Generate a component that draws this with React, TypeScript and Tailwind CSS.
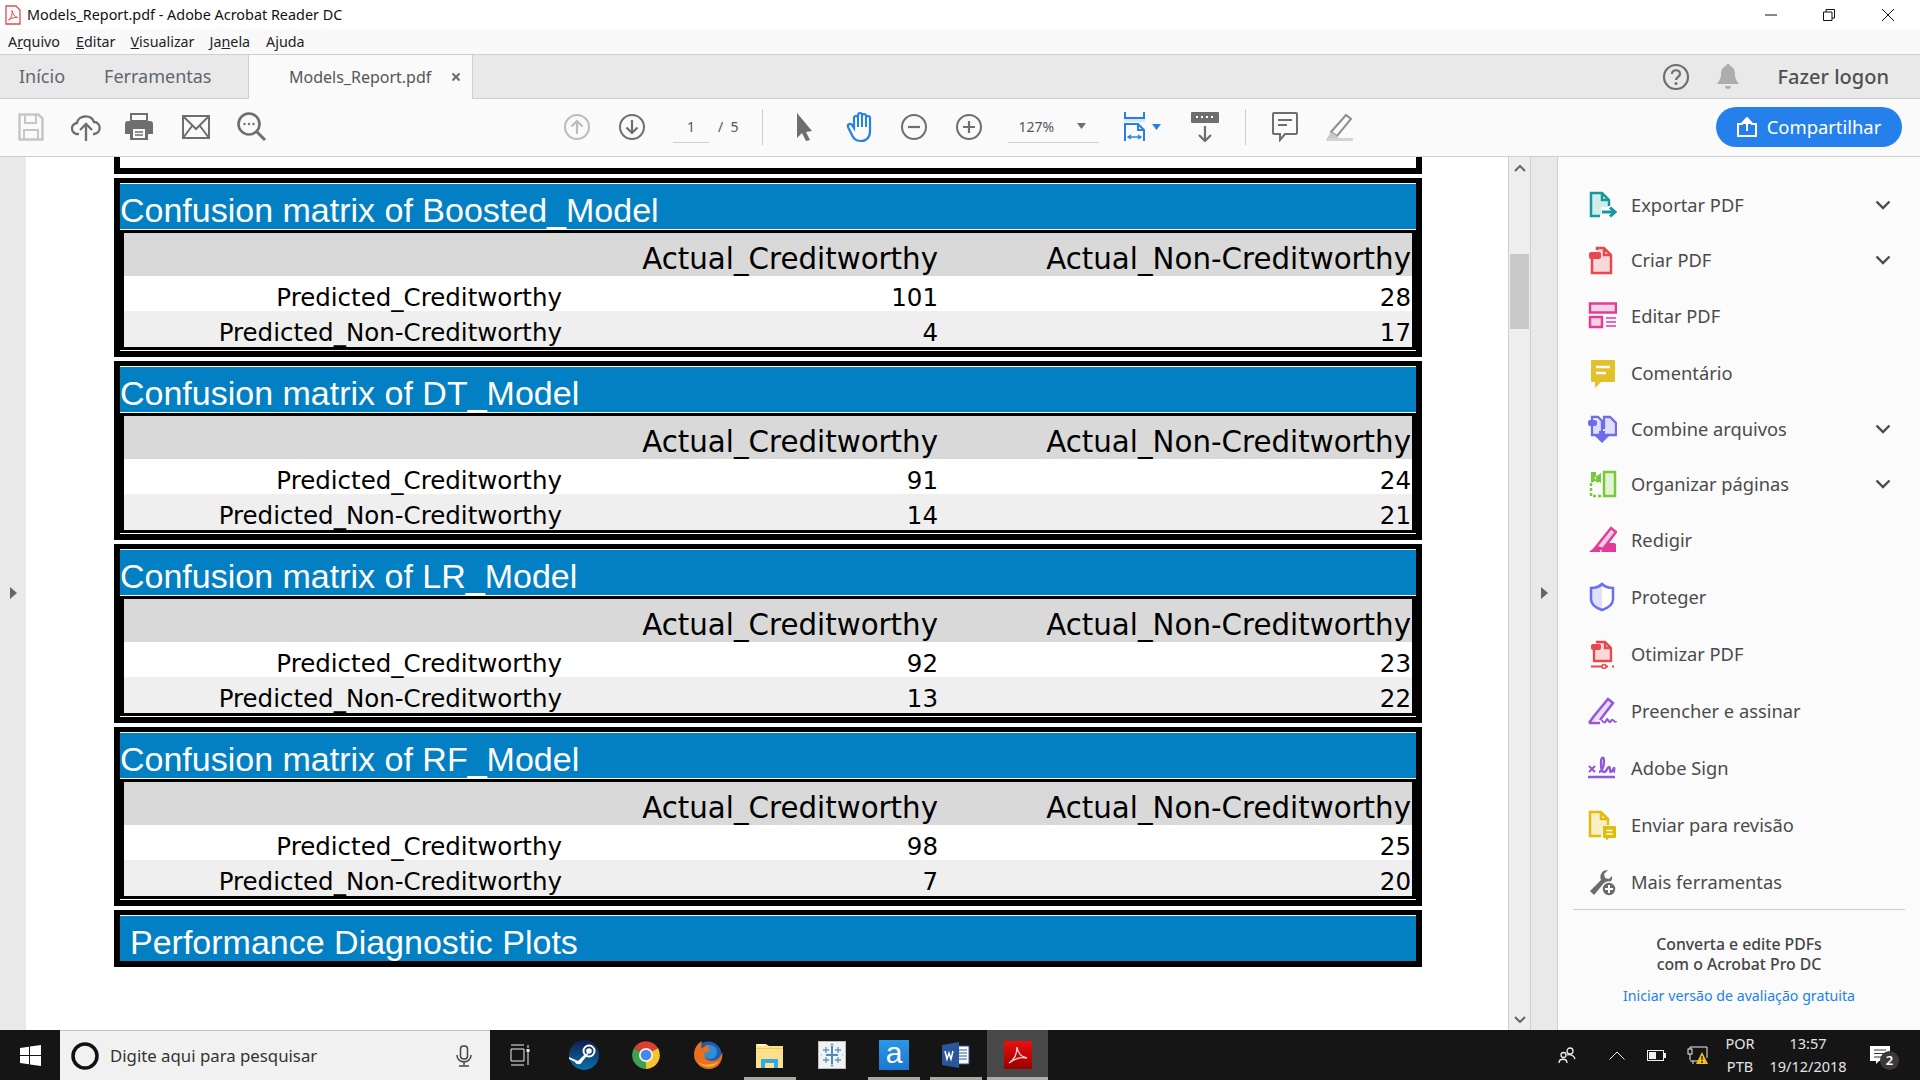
import type { ReactNode } from "react";

const matrices = [
  { name: "Boosted_Model", a: "101", b: "28", c: "4", d: "17" },
  { name: "DT_Model", a: "91", b: "24", c: "14", d: "21" },
  { name: "LR_Model", a: "92", b: "23", c: "13", d: "22" },
  { name: "RF_Model", a: "98", b: "25", c: "7", d: "20" },
];

function Svg({ size = 30, children }: { size?: number; children: ReactNode }) {
  return (
    <svg width={size} height={size} viewBox={`0 0 ${size} ${size}`} fill="none" className="shrink-0">
      {children}
    </svg>
  );
}

/* ---------- side panel icons ---------- */
const toolIcons: Record<string, ReactNode> = {
  export: (
    <Svg>
      <path d="M4 3h11l7 7v7H14v8H4z" fill="#d2ece9" />
      <path d="M13 26H4V3h11l7 7v6M15 3v7h7" stroke="#17989c" strokeWidth="2.5" />
      <path d="M15 22h12M23 17.500l5 4.500-5 4.500" stroke="#17989c" strokeWidth="3" />
    </Svg>
  ),
  create: (
    <Svg>
      <path d="M5 11V28h19V10l-7-7H10v6" fill="#f8d8d9" />
      <path d="M5 14v14h19V10l-7-7H10v2M17 3v7h7" stroke="#e8474c" strokeWidth="2.5" />
      <rect x="2" y="7" width="12" height="7" rx="2" fill="#e8474c" />
    </Svg>
  ),
  edit: (
    <Svg>
      <rect x="3" y="2.500" width="26" height="9" fill="#f5d3e6" stroke="#df3d98" strokeWidth="2.500" />
      <rect x="3" y="16" width="12" height="10" fill="#f5d3e6" stroke="#df3d98" strokeWidth="2.500" />
      <path d="M19 17h10M19 21h10M19 25h10" stroke="#df3d98" strokeWidth="1.500" />
    </Svg>
  ),
  comment: (
    <Svg>
      <path d="M5 2h22a1 1 0 0 1 1 1v20a1 1 0 0 1-1 1H14l-6 6v-6H5a1 1 0 0 1-1-1V3a1 1 0 0 1 1-1z" fill="#e2c12b" />
      <path d="M9 9h14M9 15h10" stroke="#fff" strokeWidth="2.500" />
    </Svg>
  ),
  combine: (
    <Svg>
      <path d="M5 6h10v15H5zM17 3h5l7 6v12H17z" fill="#e0dffb" />
      <path d="M5 12v9h8M5 6V3h6l4 4v14h-2M17 21h12V9l-6-6h-6v12" stroke="#6c6ced" strokeWidth="2.300" />
      <rect x="1" y="6" width="9" height="6" rx="2" fill="#6c6ced" />
      <path d="M12 17h6v5h4l-7 7-7-7h4z" fill="#6c6ced" />
    </Svg>
  ),
  organize: (
    <Svg>
      <rect x="17" y="3" width="11" height="24" fill="#e3f4d6" stroke="#78c83c" strokeWidth="2.500" />
      <path d="M14 27H4V12h10" stroke="#78c83c" strokeWidth="2.500" strokeDasharray="3 2" />
      <path d="M14 4L7 9l7 5zM4 3h5v9H4z" fill="#78c83c" />
    </Svg>
  ),
  redact: (
    <Svg>
      <path d="M9 22L24 3l5 4-13 17z" fill="#f5cde2" stroke="#df3d98" strokeWidth="2.500" />
      <path d="M2 27l7-6 5 3-1 3z" fill="#df3d98" />
      <path d="M20 18h7a2 2 0 0 1 2 2v7H14z" fill="#df3d98" />
    </Svg>
  ),
  protect: (
    <Svg>
      <path d="M15 2c3 3 7 4 11 4v11c0 6-5 9-11 11C9 26 4 23 4 17V6c4 0 8-1 11-4z" fill="#fff" />
      <path d="M15 2C12 5 8 6 4 6v11c0 6 5 9 11 11z" fill="#dfe0fb" />
      <path d="M15 2c3 3 7 4 11 4v11c0 6-5 9-11 11C9 26 4 23 4 17V6c4 0 8-1 11-4z" stroke="#6872f0" strokeWidth="2.500" />
    </Svg>
  ),
  optimize: (
    <Svg>
      <path d="M7 8v13h17V9l-6-6h-9v2" fill="#f8d8d9" />
      <path d="M7 11v11h17V9l-6-6h-8v1M18 3v6h6" stroke="#e8474c" strokeWidth="2.300" />
      <rect x="4" y="5" width="10" height="6" rx="2" fill="#e8474c" />
      <path d="M4 27.500h11M19 27.500h2M25 27.500h2" stroke="#e8474c" strokeWidth="2" />
      <circle cx="17" cy="27.500" r="2" stroke="#e8474c" strokeWidth="1.500" />
    </Svg>
  ),
  fill: (
    <Svg>
      <path d="M7 20L21 3l5 4-13 17-10 2z" fill="#e8dcf6" />
      <path d="M2 27l5-7L21 3l5 4-13 17M2 27h11" stroke="#9258d8" strokeWidth="2.500" />
      <path d="M15 24c1 3 3 3 4 1s1-3 2-1 2 3 3 1 2-1 3 0 2 1 2 0" stroke="#9258d8" strokeWidth="2" />
    </Svg>
  ),
  sign: (
    <Svg>
      <path d="M2 13l6 6M8 13l-6 6" stroke="#9258d8" strokeWidth="2" />
      <path d="M12 19c3 0 5-6 5-11 0-5-3-4-3 1 0 5 0 10 3 10s3-5 5-5 0 5 2 5 2-4 3-4-1 4 1 4" stroke="#9258d8" strokeWidth="2.300" />
      <path d="M1 24h27" stroke="#9258d8" strokeWidth="2.500" />
    </Svg>
  ),
  review: (
    <Svg>
      <path d="M3 2h11l7 7v10h-6v7H3z" fill="#f8efc4" />
      <path d="M14 26H3V2h11l7 7v6M14 2v7h7" stroke="#e0bd0a" strokeWidth="2.500" />
      <path d="M17 16h11a1 1 0 0 1 1 1v10a1 1 0 0 1-1 1h-6l-3 3v-3h-2a1 1 0 0 1-1-1V17a1 1 0 0 1 1-1z" fill="#e0bd0a" />
      <path d="M19.500 20.500h6M19.500 24h6" stroke="#fff" strokeWidth="1.500" />
    </Svg>
  ),
  more: (
    <Svg>
      <path d="M3 24L14 13c-2-5 1-10 7-10l-4 4 1 4 4 1 3-3c1 5-3 8-8 7L7 28z" fill="#6b6b6b" />
      <circle cx="22" cy="22" r="7" fill="#6b6b6b" stroke="#fbfbfb" strokeWidth="1.500" />
      <path d="M22 18v8M18 22h8" stroke="#fff" strokeWidth="2" />
    </Svg>
  ),
};

const tools = [
  { icon: "export", label: "Exportar PDF", arrow: true },
  { icon: "create", label: "Criar PDF", arrow: true },
  { icon: "edit", label: "Editar PDF" },
  { icon: "comment", label: "Comentário" },
  { icon: "combine", label: "Combine arquivos", arrow: true },
  { icon: "organize", label: "Organizar páginas", arrow: true },
  { icon: "redact", label: "Redigir" },
  { icon: "protect", label: "Proteger" },
  { icon: "optimize", label: "Otimizar PDF" },
  { icon: "fill", label: "Preencher e assinar" },
  { icon: "sign", label: "Adobe Sign" },
  { icon: "review", label: "Enviar para revisão" },
  { icon: "more", label: "Mais ferramentas" },
];

function TitleBar() {
  return (
    <div className="flex h-[29px] shrink-0 items-center bg-white pl-[5px] text-[14.4px] text-[#111]">
      <svg width="16" height="20" viewBox="0 0 16 20" fill="none">
        <path d="M1 1h10l4 4v14H1z" fill="#fff" stroke="#e8474c" strokeWidth="1.300" />
        <path d="M3.500 15c3-2 4-6 3.500-9.500 1 4 2.500 6 5.500 7-3-.3-6 .5-9 2.500z" stroke="#e8474c" />
      </svg>
      <span className="ml-[6px]">Models_Report.pdf - Adobe Acrobat Reader DC</span>
      <div className="ml-auto flex items-center">
        <svg width="12" height="2" viewBox="0 0 12 2" className="mr-[46px]">
          <path d="M0 1h12" stroke="#111" />
        </svg>
        <svg width="12" height="12" viewBox="0 0 12 12" fill="none" className="mr-[47px]">
          <path d="M.5 3h8.500v8.500H.5zM3 3V.5h8.500V9H9" stroke="#111" />
        </svg>
        <svg width="12" height="12" viewBox="0 0 12 12" className="mr-[26px]">
          <path d="M0 0l12 12M12 0L0 12" stroke="#111" />
        </svg>
      </div>
    </div>
  );
}

function MenuBar() {
  return (
    <div className="flex h-[25px] shrink-0 items-center bg-[#f9f9f9] pl-[8px] text-[14.300px] text-[#222]">
      <span>A<u>r</u>quivo</span>
      <span className="ml-[16px]"><u>E</u>ditar</span>
      <span className="ml-[15px]"><u>V</u>isualizar</span>
      <span className="ml-[15px]">Ja<u>n</u>ela</span>
      <span className="ml-[16px]">A<u>j</u>uda</span>
    </div>
  );
}

function TabBar() {
  return (
    <div className="flex h-[45px] shrink-0 items-stretch border-y border-[#cfcfcf] bg-[#e9e9e9] text-[#5d6770]">
      <div className="flex w-[248px] items-center pl-[19px] text-[18px]">
        <span>Início</span>
        <span className="ml-[39px]">Ferramentas</span>
      </div>
      <div className="-mb-px flex w-[225px] items-center border-x border-[#cfcfcf] bg-[#fafafa] pl-[40px] text-[16px] text-[#555]">
        <span>Models_Report.pdf</span>
        <svg width="10" height="10" viewBox="0 0 10 10" className="ml-[20px]">
          <path d="M1.500 1.500l7 7M8.500 1.500l-7 7" stroke="#666" strokeWidth="1.800" />
        </svg>
      </div>
      <div className="ml-auto flex items-center pr-[31px]">
        <svg width="28" height="28" viewBox="0 0 28 28" fill="none">
          <circle cx="14" cy="14" r="12" stroke="#6e6e6e" strokeWidth="2.200" />
          <path d="M10 11c0-5 8-5 8 0 0 3-4 3-4 6" stroke="#6e6e6e" strokeWidth="2.200" />
          <circle cx="14" cy="20.500" r="1.500" fill="#6e6e6e" />
        </svg>
        <svg width="24" height="27" viewBox="0 0 24 27" className="ml-[26px]">
          <path d="M12 1c2 0 2 1 2 2 4 1 5 5 5 8 0 5 2 7 4 10H1c2-3 4-5 4-10 0-3 1-7 5-8 0-1 0-2 2-2zM9 23h6c0 2-1.500 3-3 3s-3-1-3-3z" fill="#adadad" />
        </svg>
        <span className="ml-[38px] text-[20px] font-medium text-[#505050]">Fazer logon</span>
      </div>
    </div>
  );
}

const gray = "#6e6e6e";

function CircleIcon({ color, d }: { color: string; d: string }) {
  return (
    <svg width="26" height="26" viewBox="0 0 26 26" fill="none" className="shrink-0">
      <circle cx="13" cy="13" r="12" stroke={color} strokeWidth="2" />
      <path d={d} stroke={color} strokeWidth="2.200" />
    </svg>
  );
}

function ToolBar() {
  return (
    <div className="flex h-[58px] shrink-0 items-center border-b border-[#cfcfcf] bg-[#fafafa] pb-[2px]">
      <div className="ml-[18px] w-[26px]">
        <svg width="26" height="28" viewBox="0 0 26 28" fill="none">
          <path d="M1.500 1.500h19l4 4v21h-23z" stroke="#c6c6c6" strokeWidth="2.500" />
          <path d="M7 2v8h11V2M6 26v-9h14v9" stroke="#c6c6c6" strokeWidth="2" />
        </svg>
      </div>
      <div className="ml-[27px]">
        <svg width="30" height="30" viewBox="0 0 30 30" fill="none">
          <path d="M8 22H7a5.500 5.500 0 0 1-1-11c1-8 14-9 17-1 7 0 8 11 0 12h-1" stroke={gray} strokeWidth="2.300" />
          <path d="M15 29V13M9 18l6-6 6 6" stroke={gray} strokeWidth="2.300" />
        </svg>
      </div>
      <div className="ml-[24px]">
        <svg width="28" height="28" viewBox="0 0 28 28" fill="none">
          <path d="M6 1h16v7H6z" stroke={gray} strokeWidth="2" />
          <path d="M3 8h22a3 3 0 0 1 3 3v10h-5v6H5v-6H0V11a3 3 0 0 1 3-3z" fill={gray} />
          <path d="M8 16h12v9H8z" fill="#fafafa" />
          <path d="M10 19h8M10 22h8" stroke={gray} strokeWidth="1.500" />
        </svg>
      </div>
      <div className="ml-[29px]">
        <svg width="28" height="24" viewBox="0 0 28 24" fill="none">
          <path d="M1 1h26v22H1zM1 1l13 13L27 1M1 23l9-12M27 23l-9-12" stroke={gray} strokeWidth="2" />
        </svg>
      </div>
      <div className="ml-[27px]">
        <svg width="30" height="30" viewBox="0 0 30 30" fill="none">
          <circle cx="12" cy="12" r="10.500" stroke={gray} strokeWidth="2.600" />
          <path d="M19.500 19.500L28 28" stroke={gray} strokeWidth="3" />
          <circle cx="7.500" cy="12" r="1.200" fill={gray} />
          <circle cx="12" cy="12" r="1.200" fill={gray} />
          <circle cx="16.500" cy="12" r="1.200" fill={gray} />
        </svg>
      </div>
      <div className="ml-[297px]">
        <CircleIcon color="#bcbcbc" d="M13 20V7M7.500 12.500L13 7l5.500 5.500" />
      </div>
      <div className="ml-[29px]">
        <CircleIcon color={gray} d="M13 6v13M7.500 13.500L13 19l5.500-5.500" />
      </div>
      <div className="ml-[28px] flex h-[32px] w-[36px] items-center justify-center border-b border-[#cfcfcf] text-[14px] text-[#555]">1</div>
      <span className="ml-[9px] text-[14px] text-[#555]">/&nbsp;&nbsp;5</span>
      <div className="ml-[23px] h-[36px] w-px bg-[#cfcfcf]" />
      <div className="ml-[32px]">
        <svg width="18" height="28" viewBox="0 0 18 28">
          <path d="M2 0l15 18-6 1 4 8-4 1-4-8-5 5z" fill={gray} />
        </svg>
      </div>
      <div className="ml-[32px]">
        <svg width="30" height="32" viewBox="0 0 30 32" fill="none">
          <path d="M9 17V7a2 2 0 0 1 4 0V4a2 2 0 0 1 4 0v1a2 2 0 0 1 4 0v2a2 2 0 0 1 4 0v13c0 7-4 10-9 10-6 0-8-3-10-8l-3-6c-1-3 3-4 4-2z" stroke="#2680eb" strokeWidth="2.200" />
          <path d="M13 7v9M17 4v12M21 6v10" stroke="#2680eb" strokeWidth="2" />
        </svg>
      </div>
      <div className="ml-[26px]">
        <CircleIcon color={gray} d="M7 13h12" />
      </div>
      <div className="ml-[29px]">
        <CircleIcon color={gray} d="M7 13h12M13 7v12" />
      </div>
      <div className="ml-[26px] flex h-[32px] w-[91px] items-center justify-between border-b border-[#cfcfcf] pl-[11px] pr-[13px] text-[14px] text-[#555]">
        <span>127%</span>
        <svg width="9" height="6" viewBox="0 0 9 6"><path d="M0 0h9L4.500 6z" fill={gray} /></svg>
      </div>
      <div className="ml-[24px] flex items-center">
        <svg width="24" height="30" viewBox="0 0 24 30" fill="none">
          <path d="M2 0v6h19V0" stroke="#2680eb" strokeWidth="2" />
          <path d="M1 7h21v3H1z" fill="#d7e6f8" />
          <path d="M2 29V12h13l6 6v11M15 12v6h6" stroke="#2680eb" strokeWidth="2" />
          <path d="M6 25h11M8 23l-3 2 3 2M15 23l3 2-3 2" stroke="#2680eb" strokeWidth="1.300" />
        </svg>
        <svg width="9" height="6" viewBox="0 0 9 6" className="ml-[5px]"><path d="M0 0h9L4.500 6z" fill="#2680eb" /></svg>
      </div>
      <div className="ml-[30px]">
        <svg width="28" height="30" viewBox="0 0 28 30" fill="none">
          <rect width="28" height="11" rx="1" fill={gray} />
          <path d="M5 5h2M10 5h2M15 5h2M20 5h2" stroke="#fff" strokeWidth="2" strokeDasharray="2 1" />
          <path d="M14 14v15M8 23l6 6 6-6" stroke={gray} strokeWidth="2.200" />
        </svg>
      </div>
      <div className="ml-[26px] h-[36px] w-px bg-[#cfcfcf]" />
      <div className="ml-[26px]">
        <svg width="26" height="30" viewBox="0 0 26 30" fill="none">
          <path d="M2 1h22a1 1 0 0 1 1 1v19a1 1 0 0 1-1 1H13l-5 6v-6H2a1 1 0 0 1-1-1V2a1 1 0 0 1 1-1z" stroke={gray} strokeWidth="2" />
          <path d="M6 8h14M6 13h9" stroke={gray} strokeWidth="2" />
        </svg>
      </div>
      <div className="ml-[26px]">
        <svg width="30" height="30" viewBox="0 0 30 30" fill="none">
          <path d="M7 20L22 3l5 4-14 17z" stroke="#8f8f8f" strokeWidth="2" />
          <path d="M2 28l5-8 6 4 4 4z" fill="#c9c9c9" />
          <path d="M6 26h23v3H2z" fill="#d4d4d4" />
        </svg>
      </div>
      <button className="ml-auto mr-[18px] flex h-[40px] w-[186px] items-center justify-center rounded-full bg-[#2680eb] text-[18.400px] text-white">
        <svg width="20" height="20" viewBox="0 0 20 20" fill="none" className="mr-[10px]">
          <path d="M6 7H1v12h18V7h-5" stroke="#fff" strokeWidth="2" />
          <path d="M10 14V2M5.500 6L10 1l4.500 5z" stroke="#fff" strokeWidth="2" fill="#fff" />
        </svg>
        Compartilhar
      </button>
    </div>
  );
}

function Matrix({ m }: { m: (typeof matrices)[number] }) {
  return (
    <div className="mt-[4px] bg-black px-[6px] pb-[6px] pt-[5px]">
      <div className="border-y border-white bg-[#0380c3]">
        <div className="flex h-[45px] items-end font-['Liberation_Sans',sans-serif] text-[34px] leading-[38px] text-white">
          Confusion matrix of {m.name}
        </div>
      </div>
      <div className="border-b border-white px-[4px] py-[3px]">
        <div className="grid grid-cols-[438px_376px_474px] grid-rows-[43px_35px_36px] bg-white font-['DejaVu_Sans',sans-serif] text-black">
          <div className="col-span-3 col-start-1 row-start-1 bg-[#d9d9d9]" />
          <div className="col-span-3 col-start-1 row-start-3 bg-[#efefef]" />
          <div className="col-start-2 row-start-1 self-end text-right text-[29.300px] leading-[34px]">Actual_Creditworthy</div>
          <div className="col-start-3 row-start-1 self-end pr-px text-right text-[29.300px] leading-[34px]">Actual_Non-Creditworthy</div>
          <div className="col-start-1 row-start-2 self-end text-right text-[24.500px] leading-[26px]">Predicted_Creditworthy</div>
          <div className="col-start-2 row-start-2 self-end text-right text-[24.500px] leading-[26px]">{m.a}</div>
          <div className="col-start-3 row-start-2 self-end pr-px text-right text-[24.500px] leading-[26px]">{m.b}</div>
          <div className="col-start-1 row-start-3 self-end text-right text-[24.500px] leading-[28px]">Predicted_Non-Creditworthy</div>
          <div className="col-start-2 row-start-3 self-end text-right text-[24.500px] leading-[28px]">{m.c}</div>
          <div className="col-start-3 row-start-3 self-end pr-px text-right text-[24.500px] leading-[28px]">{m.d}</div>
        </div>
      </div>
    </div>
  );
}

function PageView() {
  return (
    <div className="min-w-0 flex-1 overflow-hidden bg-white pl-[88px] pr-[86px]">
      <div className="h-[17px] bg-black px-[6px] pb-[6px]">
        <div className="h-[11px] bg-white" />
      </div>
      {matrices.map((m) => (
        <Matrix key={m.name} m={m} />
      ))}
      <div className="mt-[4px] bg-black px-[6px] pb-[6px] pt-[5px]">
        <div className="flex h-[46px] items-end border-t border-white bg-[#0380c3] pl-[10px] font-['Liberation_Sans',sans-serif] text-[34px] leading-[38px] text-white">
          Performance Diagnostic Plots
        </div>
      </div>
    </div>
  );
}

function Scrollbar() {
  return (
    <div className="flex w-[23px] shrink-0 flex-col items-center border-x border-[#cfcfcf] bg-[#eeeeee]">
      <svg width="12" height="7" viewBox="0 0 12 7" fill="none" className="mt-[8px]">
        <path d="M1 6l5-5 5 5" stroke="#666" strokeWidth="2" />
      </svg>
      <div className="mt-[82px] h-[75px] w-[19px] bg-[#c9c9c9]" />
      <svg width="12" height="7" viewBox="0 0 12 7" fill="none" className="mb-[7px] mt-auto">
        <path d="M1 1l5 5 5-5" stroke="#666" strokeWidth="2" />
      </svg>
    </div>
  );
}

function SidePanel() {
  return (
    <div className="w-[362px] shrink-0 bg-[#fbfbfb] pt-[20px] text-[#4b4b4b]">
      {tools.map((t) => (
        <div key={t.label} className={t.arrow ? "flex h-[55px] items-center pl-[29px] pr-[29px]" : "flex h-[57px] items-center pl-[29px] pr-[29px]"}>
          <span className="w-[30px]">{toolIcons[t.icon]}</span>
          <span className="ml-[14px] text-[18.300px]">{t.label}</span>
          {t.arrow && (
            <svg width="16" height="10" viewBox="0 0 16 10" fill="none" className="ml-auto">
              <path d="M1.500 1.500L8 8l6.500-6.500" stroke="#4b4b4b" strokeWidth="2.400" />
            </svg>
          )}
        </div>
      ))}
      <div className="mx-[15px] -mt-px border-t border-[#cfcfcf]" />
      <div className="mt-[24px] text-center text-[15.800px] font-medium leading-[20px] text-[#444]">
        <div>Converta e edite PDFs</div>
        <div>com o Acrobat Pro DC</div>
      </div>
      <div className="mt-[11px] text-center text-[14.200px] text-[#2680eb]">Iniciar versão de avaliação gratuita</div>
    </div>
  );
}

function Taskbar() {
  const slot = "relative flex w-[62px] items-center justify-center";
  const mark = "absolute bottom-0 left-[5px] right-[5px] h-[3px] bg-[#a8a8a4]";
  return (
    <div className="flex h-[50px] shrink-0 items-stretch bg-[#151515] font-['Noto_Sans',sans-serif] text-[#e4e4e4]">
      <div className="flex w-[60px] items-center justify-center">
        <svg width="21" height="21" viewBox="0 0 21 21">
          <path d="M0 3l9-1.300V10H0zM10 1.500L21 0v10H10zM0 11h9v8.300L0 18zM10 11h11v10l-11-1.500z" fill="#fff" />
        </svg>
      </div>
      <div className="flex w-[430px] items-center border-t border-[#c4c4c4] bg-[#f1f1f1] text-[#333]">
        <svg width="28" height="28" viewBox="0 0 28 28" fill="none" className="ml-[11px]">
          <circle cx="14" cy="14" r="12" stroke="#111" strokeWidth="3.500" />
        </svg>
        <span className="ml-[11px] text-[16.800px]">Digite aqui para pesquisar</span>
        <svg width="16" height="22" viewBox="0 0 16 22" fill="none" className="ml-auto mr-[18px]">
          <rect x="4.500" y="1" width="7" height="13" rx="3" stroke="#444" strokeWidth="1.500" />
          <path d="M1 10c0 9 14 9 14 0M8 17v3M3 21h10" stroke="#444" strokeWidth="1.500" />
        </svg>
      </div>
      <div className="flex w-[63px] items-center justify-center pr-[4px]">
        <svg width="20" height="22" viewBox="0 0 20 22" fill="none">
          <path d="M1 5h13v12H1zM1 1h13M1 21h13M18 1v3M18 8v13" stroke="#eee" />
          <rect x="16.500" y="5" width="3" height="3" fill="#eee" />
        </svg>
      </div>
      <div className={slot}>
        <svg width="30" height="30" viewBox="0 0 30 30">
          <defs>
            <linearGradient id="steam" x1="0" y1="0" x2="0" y2="1">
              <stop offset="0" stopColor="#10204a" />
              <stop offset="1" stopColor="#0b6fae" />
            </linearGradient>
          </defs>
          <circle cx="15" cy="15" r="15" fill="url(#steam)" />
          <path d="M0 17l9 4 7-7 4-1-7 9c-1 3-6 3-7 0l-6-3z" fill="#fff" />
          <circle cx="20" cy="11" r="5.500" fill="none" stroke="#fff" strokeWidth="2" />
          <circle cx="20" cy="11" r="2.800" fill="#fff" />
        </svg>
      </div>
      <div className={slot}>
        <svg width="30" height="30" viewBox="0 0 30 30">
          <path d="M15 15L3 8A14 14 0 0 1 27 8z" fill="#d9402f" />
          <path d="M15 15L27 8a14 14 0 0 1-12 21z" fill="#f5c32c" />
          <path d="M15 15v14A14 14 0 0 1 3 8z" fill="#3fa14d" />
          <circle cx="15" cy="15" r="7" fill="#f4f4f4" />
          <circle cx="15" cy="15" r="5.300" fill="#4a87ec" />
        </svg>
      </div>
      <div className={slot}>
        <svg width="30" height="30" viewBox="0 0 30 30">
          <circle cx="15" cy="15" r="13.500" fill="#1d5fae" />
          <circle cx="17" cy="12" r="7" fill="#2d8fd8" />
          <path d="M9 1C2 4-2 16 4 23c6 8 18 8 23 0 2-3 3-8 2-11-1 5-5 9-10 9-6 0-9-5-7-8 2-2 5-1 6-3-3-1-3-3-2-5-3 0-6 2-7 4C8 7 8 4 9 1z" fill="#e8701f" />
          <path d="M5 22c6 7 17 6 21-1-5 4-14 5-21 1z" fill="#f7b03c" />
        </svg>
      </div>
      <div className={slot}>
        <svg width="28" height="26" viewBox="0 0 28 26">
          <path d="M0 2h10l3 2h14v22H0z" fill="#fce08a" />
          <path d="M2 2h7v2H2z" fill="#fff5cf" />
          <path d="M0 6h27v1H0z" fill="#f1c75e" />
          <path d="M5 26V17h17v9h-4v-5H9v5z" fill="#2fa9e8" />
        </svg>
        <div className={mark} />
      </div>
      <div className={slot}>
        <svg width="28" height="28" viewBox="0 0 28 28" fill="none">
          <rect x=".5" y=".5" width="27" height="27" fill="#f2f2f2" stroke="#bbb" />
          <path d="M14 5v18M8 14h12" stroke="#4e8ab8" strokeWidth="2" />
          <path d="M8 6v6M5 9h6M20 6v6M17 9h6M8 16v6M5 19h6M20 16v6M17 19h6" stroke="#5f97bd" strokeWidth="1.300" />
          <path d="M14 2v3M12.500 3.500h3M14 23v3M12.500 24.500h3M3 14h1M24 14h1" stroke="#7fa9c9" />
        </svg>
      </div>
      <div className={slot}>
        <div className="flex h-[30px] w-[30px] items-center justify-center bg-gradient-to-b from-[#2a97e8] to-[#1b78d0] pb-[4px] font-['Liberation_Sans',sans-serif] text-[30px] leading-none text-white">a</div>
        <div className={mark} />
      </div>
      <div className={slot}>
        <svg width="28" height="28" viewBox="0 0 28 28">
          <path d="M15 5h12v18H15z" fill="#fff" stroke="#2b579a" />
          <path d="M17 9h8M17 12h8M17 15h8M17 18h8" stroke="#2b579a" />
          <path d="M0 4l17-3v26L0 24z" fill="#2b579a" />
          <path d="M3 10l2 8 2-6 2 6 2-8" fill="none" stroke="#fff" strokeWidth="1.500" />
        </svg>
        <div className={mark} />
      </div>
      <div className="relative flex w-[61px] items-center justify-center bg-[#484848]">
        <svg width="28" height="28" viewBox="0 0 28 28" fill="none">
          <defs>
            <linearGradient id="acro" x1="0" y1="0" x2="0" y2="1">
              <stop offset="0" stopColor="#ea0f0f" />
              <stop offset="1" stopColor="#990000" />
            </linearGradient>
          </defs>
          <rect width="28" height="28" fill="url(#acro)" />
          <path d="M5 22c5-3 8-9 8-16 1 7 4 10 10 11-6-1-13 1-18 5z" stroke="#f5dcdc" strokeWidth="1.300" />
        </svg>
        <div className="absolute bottom-0 left-0 right-0 h-[3px] bg-[#adadad]" />
      </div>
      <div className="ml-auto flex items-center">
        <svg width="18" height="18" viewBox="0 0 18 18" fill="none">
          <circle cx="12" cy="5" r="3" stroke="#eee" strokeWidth="1.300" />
          <circle cx="5.500" cy="9" r="2.500" stroke="#eee" strokeWidth="1.300" />
          <path d="M1 17c0-5 8-5 8 0M9 9c3-1 7 0 8 4" stroke="#eee" strokeWidth="1.300" />
        </svg>
        <svg width="16" height="9" viewBox="0 0 16 9" fill="none" className="ml-[33px]">
          <path d="M.5 8.500L8 1l7.500 7.500" stroke="#eee" />
        </svg>
        <svg width="19" height="11" viewBox="0 0 19 11" className="ml-[22px]">
          <rect x=".5" y=".5" width="16" height="10" fill="none" stroke="#eee" />
          <rect x="2" y="2" width="7" height="7" fill="#eee" />
          <rect x="17" y="3" width="2" height="5" fill="#eee" />
        </svg>
        <svg width="21" height="19" viewBox="0 0 21 19" fill="none" className="ml-[21px]">
          <path d="M3 14V1h17v11M3 15h8M6 15v3" stroke="#eee" />
          <rect x="1" y="3" width="4" height="5" fill="#151515" stroke="#eee" />
          <path d="M15 6l6 12H9z" fill="#f4c20d" />
          <path d="M15 10v4M15 15v2" stroke="#111" strokeWidth="1.300" />
        </svg>
        <div className="ml-[10px] flex w-[44px] flex-col items-center text-[14.500px] leading-[23px]">
          <span>POR</span>
          <span>PTB</span>
        </div>
        <div className="ml-[2px] flex w-[88px] flex-col items-center text-[14.500px] leading-[23px]">
          <span>13:57</span>
          <span>19/12/2018</span>
        </div>
        <div className="relative ml-[18px] mr-[30px]">
          <svg width="20" height="18" viewBox="0 0 20 18">
            <path d="M0 0h20v15H9l-3 3v-3H0z" fill="#fff" />
            <path d="M4 4h12M4 7.500h12M4 11h12" stroke="#333" />
          </svg>
          <div className="absolute -bottom-[6px] -right-[9px] flex h-[19px] w-[19px] items-center justify-center rounded-full bg-[#3a3a3a] text-[13px] font-semibold text-white">2</div>
        </div>
      </div>
    </div>
  );
}

export default function App() {
  return (
    <div className="flex h-screen w-full flex-col overflow-hidden bg-white font-['Noto_Sans',sans-serif]">
      <TitleBar />
      <MenuBar />
      <TabBar />
      <ToolBar />
      <div className="flex min-h-0 flex-1">
        <div className="flex w-[26px] shrink-0 items-center justify-center bg-[#e9e9e9] pb-[2px]">
          <svg width="7" height="12" viewBox="0 0 7 12"><path d="M0 0l7 6-7 6z" fill="#666" /></svg>
        </div>
        <PageView />
        <Scrollbar />
        <div className="flex w-[27px] shrink-0 items-center justify-center border-r border-[#cfcfcf] bg-[#e9e9e9] pb-[2px]">
          <svg width="7" height="12" viewBox="0 0 7 12"><path d="M0 0l7 6-7 6z" fill="#666" /></svg>
        </div>
        <SidePanel />
      </div>
      <Taskbar />
    </div>
  );
}
